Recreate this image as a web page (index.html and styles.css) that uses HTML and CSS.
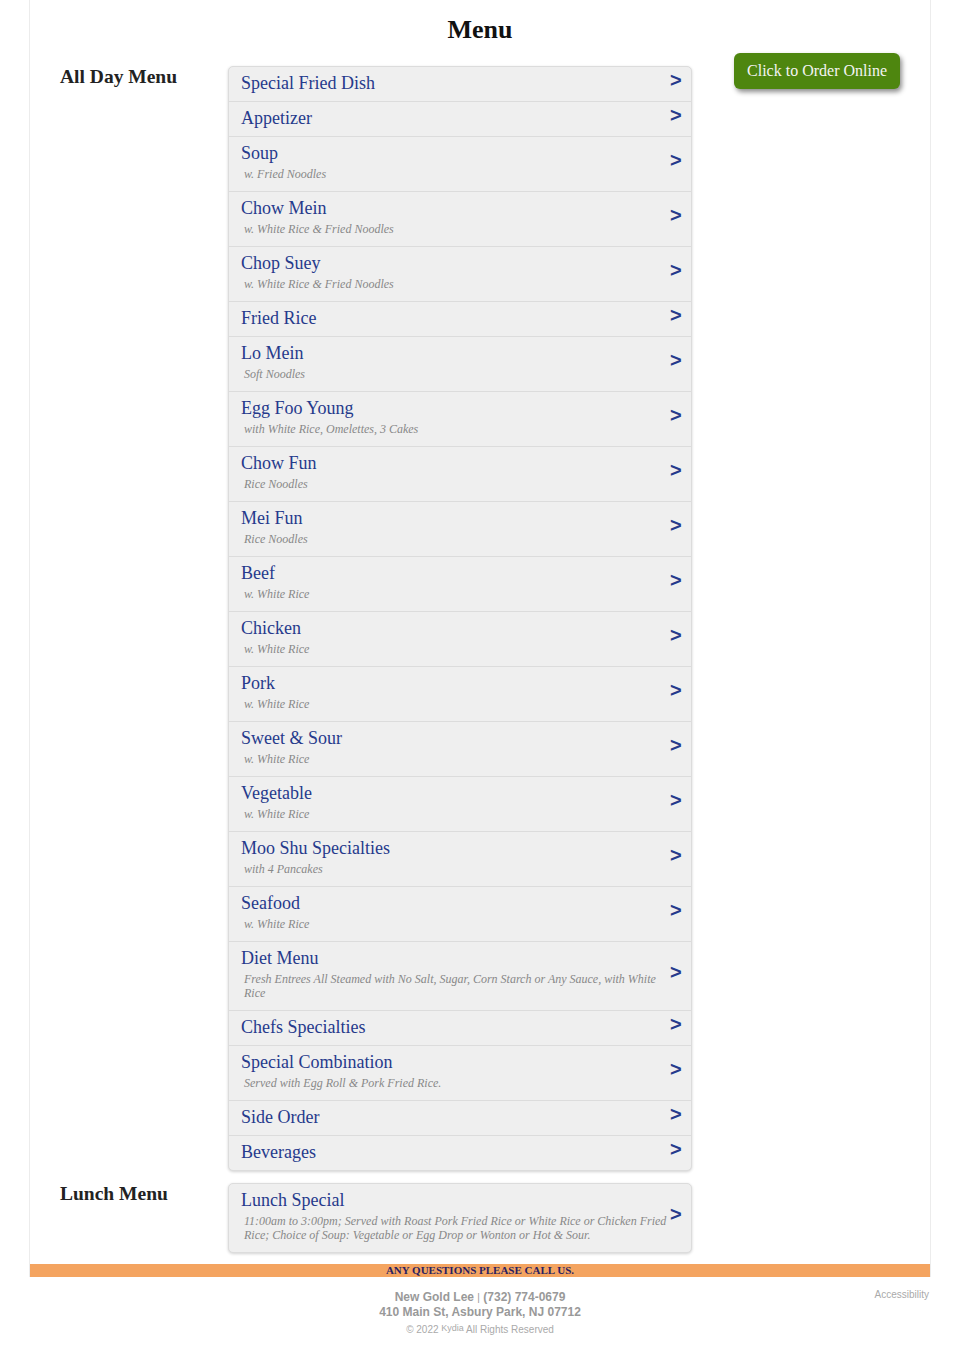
FILE: index.html
```html
<!DOCTYPE html>
<html lang="en">
<head>
<meta charset="utf-8">
<title>Menu</title>
<link rel="stylesheet" href="styles.css">
</head>
<body>
<div class="page">
  <h1 class="page-title">Menu</h1>
  <div class="content">
    <div class="sections">
      <section class="section">
        <h2 class="section-label">All Day Menu</h2>
        <ul class="menu-list">
          <li class="item"><div class="item-text"><div class="item-title">Special Fried Dish</div></div><span class="arrow">&gt;</span></li>
          <li class="item"><div class="item-text"><div class="item-title">Appetizer</div></div><span class="arrow">&gt;</span></li>
          <li class="item"><div class="item-text"><div class="item-title">Soup</div><div class="item-sub">w. Fried Noodles</div></div><span class="arrow">&gt;</span></li>
          <li class="item"><div class="item-text"><div class="item-title">Chow Mein</div><div class="item-sub">w. White Rice &amp; Fried Noodles</div></div><span class="arrow">&gt;</span></li>
          <li class="item"><div class="item-text"><div class="item-title">Chop Suey</div><div class="item-sub">w. White Rice &amp; Fried Noodles</div></div><span class="arrow">&gt;</span></li>
          <li class="item"><div class="item-text"><div class="item-title">Fried Rice</div></div><span class="arrow">&gt;</span></li>
          <li class="item"><div class="item-text"><div class="item-title">Lo Mein</div><div class="item-sub">Soft Noodles</div></div><span class="arrow">&gt;</span></li>
          <li class="item"><div class="item-text"><div class="item-title">Egg Foo Young</div><div class="item-sub">with White Rice, Omelettes, 3 Cakes</div></div><span class="arrow">&gt;</span></li>
          <li class="item"><div class="item-text"><div class="item-title">Chow Fun</div><div class="item-sub">Rice Noodles</div></div><span class="arrow">&gt;</span></li>
          <li class="item"><div class="item-text"><div class="item-title">Mei Fun</div><div class="item-sub">Rice Noodles</div></div><span class="arrow">&gt;</span></li>
          <li class="item"><div class="item-text"><div class="item-title">Beef</div><div class="item-sub">w. White Rice</div></div><span class="arrow">&gt;</span></li>
          <li class="item"><div class="item-text"><div class="item-title">Chicken</div><div class="item-sub">w. White Rice</div></div><span class="arrow">&gt;</span></li>
          <li class="item"><div class="item-text"><div class="item-title">Pork</div><div class="item-sub">w. White Rice</div></div><span class="arrow">&gt;</span></li>
          <li class="item"><div class="item-text"><div class="item-title">Sweet &amp; Sour</div><div class="item-sub">w. White Rice</div></div><span class="arrow">&gt;</span></li>
          <li class="item"><div class="item-text"><div class="item-title">Vegetable</div><div class="item-sub">w. White Rice</div></div><span class="arrow">&gt;</span></li>
          <li class="item"><div class="item-text"><div class="item-title">Moo Shu Specialties</div><div class="item-sub">with 4 Pancakes</div></div><span class="arrow">&gt;</span></li>
          <li class="item"><div class="item-text"><div class="item-title">Seafood</div><div class="item-sub">w. White Rice</div></div><span class="arrow">&gt;</span></li>
          <li class="item"><div class="item-text"><div class="item-title">Diet Menu</div><div class="item-sub">Fresh Entrees All Steamed with No Salt, Sugar, Corn Starch or Any Sauce, with White Rice</div></div><span class="arrow">&gt;</span></li>
          <li class="item"><div class="item-text"><div class="item-title">Chefs Specialties</div></div><span class="arrow">&gt;</span></li>
          <li class="item"><div class="item-text"><div class="item-title">Special Combination</div><div class="item-sub">Served with Egg Roll &amp; Pork Fried Rice.</div></div><span class="arrow">&gt;</span></li>
          <li class="item"><div class="item-text"><div class="item-title">Side Order</div></div><span class="arrow">&gt;</span></li>
          <li class="item"><div class="item-text"><div class="item-title">Beverages</div></div><span class="arrow">&gt;</span></li>
        </ul>
      </section>
      <section class="section">
        <h2 class="section-label">Lunch Menu</h2>
        <ul class="menu-list">
          <li class="item"><div class="item-text"><div class="item-title">Lunch Special</div><div class="item-sub">11:00am to 3:00pm; Served with Roast Pork Fried Rice or White Rice or Chicken Fried Rice; Choice of Soup: Vegetable or Egg Drop or Wonton or Hot &amp; Sour.</div></div><span class="arrow">&gt;</span></li>
        </ul>
      </section>
    </div>
    <aside class="aside">
      <a class="order-btn" href="#">Click to Order Online</a>
    </aside>
  </div>
  <div class="banner">ANY QUESTIONS PLEASE CALL US.</div>
</div>
<footer class="footer">
  <div class="footer-main">
    <div class="footer-line"><span>New Gold Lee</span> <span class="sep">|</span> <span>(732) 774-0679</span></div>
    <div class="footer-line">410 Main St, Asbury Park, NJ 07712</div>
    <div class="footer-copy">© 2022 <span class="brand">Kydia</span> All Rights Reserved</div>
  </div>
  <a class="access" href="#">Accessibility</a>
</footer>
</body>
</html>
```

FILE: styles.css
```css
* { box-sizing: border-box; }

body {
  margin: 0;
  background: #fff;
  font-family: "Liberation Serif", "Times New Roman", serif;
  color: #222;
}

.page {
  width: 902px;
  margin: 0 auto;
  border-left: 1px solid #ececec;
  border-right: 1px solid #ececec;
}

.page-title {
  margin: 0;
  padding-top: 15px;
  font-size: 26px;
  line-height: 30px;
  font-weight: bold;
  text-align: center;
  color: #111;
}

.content {
  display: flex;
  padding: 0 30px;
}

.sections {
  display: flex;
  flex-direction: column;
  gap: 12px;
  padding-top: 21px;
}

.section {
  display: flex;
  align-items: flex-start;
}

.section-label {
  width: 168px;
  margin: 0;
  font-size: 19.5px;
  line-height: 22px;
  font-weight: bold;
  color: #222;
}

.menu-list {
  width: 464px;
  margin: 0;
  padding: 0;
  list-style: none;
  background: #efefef;
  border: 1px solid #dcdcdc;
  border-radius: 5px;
  box-shadow: 0 1px 3px rgba(0, 0, 0, 0.18);
}

.item {
  display: flex;
  align-items: center;
  padding: 6px 12px 7px 12px;
  border-top: 1px solid #dcdcdc;
}

.item:first-child { border-top: none; }

.item-text {
  flex: 1;
  min-width: 0;
}

.item-title {
  font-size: 18px;
  line-height: 21px;
  color: #263a8c;
}

.item-sub {
  margin: 3px 0 3px 3px;
  font-size: 12px;
  line-height: 14px;
  font-style: italic;
  color: #888;
}

.arrow {
  width: 9px;
  margin-top: -7px;
  font-family: "Liberation Sans", Arial, sans-serif;
  font-weight: bold;
  font-size: 20px;
  line-height: 20px;
  color: #263a8c;
  white-space: nowrap;
}

.aside {
  flex: 1;
  display: flex;
  justify-content: flex-end;
  align-items: flex-start;
  padding-top: 8px;
}

.order-btn {
  display: block;
  padding: 8px 13px 9px 13px;
  font-size: 16px;
  line-height: 19px;
  color: #f4f4f4;
  text-decoration: none;
  background: #4e860f;
  border-radius: 6px;
  box-shadow: 2px 3px 5px rgba(0, 0, 0, 0.45);
}

.banner {
  margin-top: 11px;
  height: 13px;
  background: #f4a460;
  text-align: center;
  font-size: 11px;
  line-height: 13px;
  font-weight: bold;
  color: #2b1f62;
}

.footer {
  position: relative;
  padding: 13px 0 20px;
  font-family: "Liberation Sans", Arial, sans-serif;
  text-align: center;
}

.footer-line {
  font-size: 12px;
  line-height: 14px;
  font-weight: bold;
  color: #999;
}

.sep {
  font-weight: normal;
  font-size: 10px;
}

.footer-copy {
  margin-top: 2px;
  font-size: 10px;
  line-height: 14px;
  color: #aaa;
}

.brand {
  font-size: 9px;
  vertical-align: 2px;
}

.access {
  position: absolute;
  top: 12px;
  right: 31px;
  font-size: 10px;
  color: #aaa;
  text-decoration: none;
}
```
